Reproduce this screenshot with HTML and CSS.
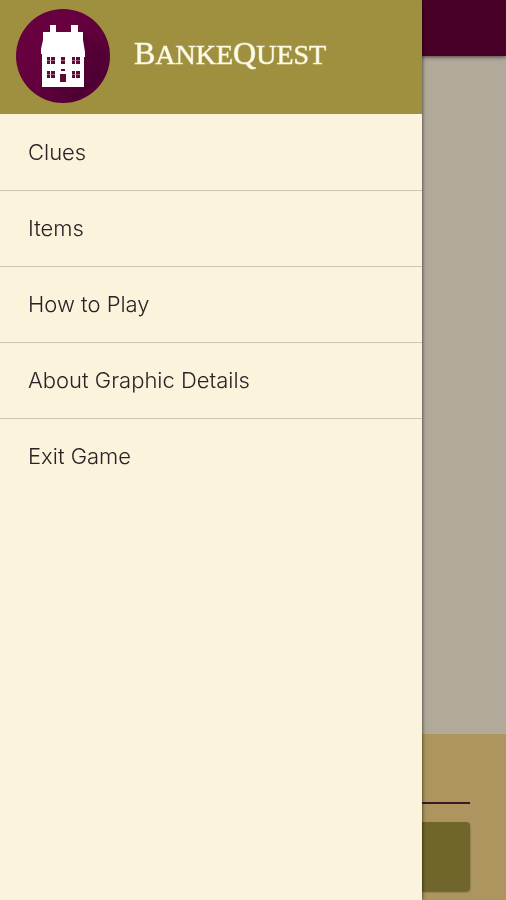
FILE: index.html
```html
<!DOCTYPE html>
<html lang="en">
<head>
<meta charset="utf-8">
<meta name="viewport" content="width=device-width, initial-scale=1">
<title>BankeQuest</title>
<link rel="stylesheet" href="styles.css">
</head>
<body>
<div class="game">
  <header class="game-bar"></header>
  <main class="game-view"></main>
  <footer class="game-panel">
    <hr class="panel-rule">
    <button class="panel-button" type="button" aria-label="Continue"></button>
  </footer>
</div>
<aside class="drawer">
  <div class="drawer-header">
    <svg class="logo" viewBox="0 0 96 96" aria-hidden="true">
      <defs>
        <linearGradient id="disc" x1="0" y1="0" x2="1" y2="1">
          <stop offset="0.4" stop-color="#66003f"/>
          <stop offset="0.8" stop-color="#540036"/>
        </linearGradient>
      </defs>
      <circle cx="48" cy="48" r="47" fill="url(#disc)"/>
      <path d="M68 24 90 44Q88 78 60 91L27 79 69 78Z" fill="#400029" opacity=".25"/>
      <path fill="#fff" d="M35 17h6v7h15v-7h7v7h5v8l2 12v5h-1v30H27V46h-1v-5l2-9v-8h7z"/>
      <g fill="#5b0b35">
        <path d="M32 49h3v7h-3zM36 49h4v7h-4zM46 49h4v7h-4zM57 49h3v7h-3zM61 49h4v7h-4z"/>
        <path d="M32 63h3v7h-3zM36 63h4v7h-4zM57 63h3v7h-3zM61 63h4v7h-4zM45 66h6v8h-6zM46 61h4v2h-4z"/>
      </g>
      <path d="M32 52.5h8M46 52.5h4M57 52.5h8M32 66.5h8M57 66.5h8" stroke="#b68a9f" stroke-width=".7"/>
    </svg>
    <h1 class="brand"><span class="cap">B</span>anke<span class="cap">Q</span>uest</h1>
  </div>
  <nav class="menu">
    <a href="#clues">Clues</a>
    <a href="#items">Items</a>
    <a href="#help">How to Play</a>
    <a href="#about">About Graphic Details</a>
    <a href="#exit">Exit Game</a>
  </nav>
</aside>
</body>
</html>
```
FILE: styles.css
```css
* { box-sizing: border-box; }
body {
  margin: 0;
  font-family: Inter, "Liberation Sans", sans-serif;
}
.game {
  display: flex;
  flex-direction: column;
  min-height: 100vh;
  background: #b1aa9a;
}
.game-bar {
  height: 56px;
  background: #490028;
  box-shadow: 0 1px 4px rgba(0, 0, 0, .6);
}
.game-view { flex: 1; }
.game-panel {
  padding: 68px 36px 9px;
  background: #ac955e;
}
.panel-rule {
  height: 2px;
  margin: 0 0 18px;
  border: 0;
  background: #3d1824;
}
.panel-button {
  display: block;
  width: 100%;
  height: 69px;
  border: 0;
  border-radius: 4px;
  background: #70662b;
  box-shadow: 0 1px 2px rgba(0, 0, 0, .4);
}
.drawer {
  position: fixed;
  top: 0;
  bottom: 0;
  left: 0;
  width: 83.4%;
  background: #fbf3dc;
  box-shadow: 0 0 4px rgba(0, 0, 0, .75);
}
.drawer-header {
  display: flex;
  align-items: center;
  gap: 23px;
  padding: 8px 15px 10px;
  background: #9e903e;
}
.logo {
  flex: none;
  width: 96px;
  height: 96px;
}
.brand {
  margin: 0;
  padding-bottom: 4px;
  color: #fffbea;
  font: 400 28px/32px "Liberation Serif", serif;
  text-transform: uppercase;
  -webkit-text-stroke: 1px #fffbea80;
}
.cap { font-size: 32px; }
.menu {
  display: flex;
  flex-direction: column;
}
.menu a {
  padding: 22px 28px;
  color: #292326;
  font-size: 22px;
  font-weight: 350;
  line-height: 32px;
  text-decoration: none;
}
.menu a + a {
  padding-top: 21px;
  border-top: 1px solid #cdc4b3;
}
```
